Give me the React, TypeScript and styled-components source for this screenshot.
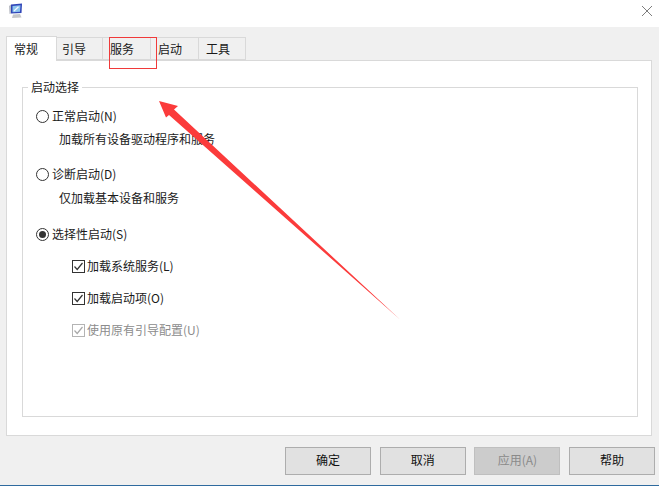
import React from "react";
import styled, { createGlobalStyle } from "styled-components";

const GlobalStyle = createGlobalStyle`
  html, body {
    margin: 0;
    padding: 0;
    background: #f0f0f0;
  }
  * {
    box-sizing: border-box;
  }
`;

const TABS = [
  { label: "常规", width: 51, pad: 7 },
  { label: "引导", width: 46, pad: 5 },
  { label: "服务", width: 48, pad: 7 },
  { label: "启动", width: 48, pad: 7 },
  { label: "工具", width: 47, pad: 7 },
];

export default function App() {
  return (
    <Dialog>
      <GlobalStyle />
      <TitleBar>
        <AppIcon viewBox="0 0 16 16">
          <path d="M3 1.5 L14 0.5 L13.5 10 L3 10.5 Z" fill="#2f45b8" />
          <path d="M4.5 3 L12.5 2.3 L12 8.8 L4.5 9.2 Z" fill="#8cc4ee" />
          <path d="M6 8 L10.5 3.8" stroke="#f4f8ff" strokeWidth="1.2" />
          <path d="M1 3 L3 1.5 L3 10.5 L1.5 11 Z" fill="#b9bcc4" />
          <path d="M5 11.5 L12 11 L13.5 14.5 L4 15 Z" fill="#c5c7c9" />
        </AppIcon>
        <CloseIcon viewBox="0 0 10 10">
          <path d="M0 0 L10 10 M10 0 L0 10" stroke="#7d7d7d" strokeWidth="1" fill="none" />
        </CloseIcon>
      </TitleBar>

      <Body>
        <TabRow>
          {TABS.map((tab, i) => (
            <Tab key={tab.label} $active={i === 0} $width={tab.width} $pad={tab.pad}>
              {tab.label}
            </Tab>
          ))}
        </TabRow>

        <Panel>
          <GroupBox>
            <GroupLegend>启动选择</GroupLegend>

            <OptionBlock $height={58}>
              <Option>
                <Radio />
                正常启动(N)
              </Option>
              <Description $gap={6}>加载所有设备驱动程序和服务</Description>
            </OptionBlock>

            <OptionBlock $height={60}>
              <Option>
                <Radio />
                诊断启动(D)
              </Option>
              <Description $gap={7}>仅加载基本设备和服务</Description>
            </OptionBlock>

            <OptionBlock $height={32}>
              <Option>
                <Radio $checked />
                选择性启动(S)
              </Option>
            </OptionBlock>

            <CheckList>
              <CheckRow>
                <CheckBox />
                加载系统服务(L)
              </CheckRow>
              <CheckRow>
                <CheckBox />
                加载启动项(O)
              </CheckRow>
              <CheckRow $disabled>
                <CheckBox $disabled />
                使用原有引导配置(U)
              </CheckRow>
            </CheckList>
          </GroupBox>
        </Panel>

        <ButtonRow>
          <DialogButton>确定</DialogButton>
          <DialogButton>取消</DialogButton>
          <DialogButton $disabled>应用(A)</DialogButton>
          <DialogButton>帮助</DialogButton>
        </ButtonRow>
      </Body>
      <BottomEdge />

      <Highlight />
      <Arrow viewBox="0 0 659 486">
        <polygon
          points="159,101 178,106 174,109.5 400,319.5 169,115 166,117.5"
          fill="#fb3b3b"
        />
      </Arrow>
    </Dialog>
  );
}

function CheckBox({ $disabled }: { $disabled?: boolean }) {
  const color = $disabled ? "#b4b4b4" : "#333333";
  return (
    <CheckIcon viewBox="0 0 13 13">
      <rect x="0.5" y="0.5" width="12" height="12" fill="#fff" stroke={color} />
      <path d="M2.5 6.5 L5.2 9.5 L10.5 3" stroke={$disabled ? "#a8a8a8" : "#333"} strokeWidth="1.2" fill="none" />
    </CheckIcon>
  );
}

const Dialog = styled.div`
  position: relative;
  width: 659px;
  height: 486px;
  overflow: hidden;
  display: flex;
  flex-direction: column;
  background: #f0f0f0;
  color: #1a1a1a;
  font-family: "Noto Sans CJK SC", "Liberation Sans", sans-serif;
  font-size: 12px;
`;

const TitleBar = styled.div`
  height: 27px;
  flex: none;
  background: #fff;
  display: flex;
  align-items: flex-start;
  justify-content: space-between;
  padding: 3px 7px 0 8px;
`;

const AppIcon = styled.svg`
  width: 16px;
  height: 16px;
`;

const CloseIcon = styled.svg`
  width: 10px;
  height: 10px;
  margin-top: 3px;
`;

const Body = styled.div`
  flex: 1;
  display: flex;
  flex-direction: column;
  padding: 9px 7px 0 6px;
`;

const TabRow = styled.div`
  display: flex;
  height: 24px;
  align-items: flex-end;
  position: relative;
  z-index: 1;
`;

const Tab = styled.div<{ $active?: boolean; $width: number; $pad: number }>`
  height: ${(p) => (p.$active ? "25px" : "23px")};
  width: ${(p) => p.$width}px;
  flex: none;
  margin-bottom: ${(p) => (p.$active ? "-1px" : "0")};
  padding-left: ${(p) => p.$pad}px;
  line-height: ${(p) => (p.$active ? "23px" : "21px")};
  background: ${(p) => (p.$active ? "#fff" : "#f0f0f0")};
  border: 1px solid #d9d9d9;
  border-left: ${(p) => (p.$active ? "1px solid #d9d9d9" : "none")};
  border-bottom: ${(p) => (p.$active ? "none" : "1px solid #d9d9d9")};
`;

const Panel = styled.div`
  height: 376px;
  background: #fff;
  border: 1px solid #d9d9d9;
  padding: 26px 13px 18px 15px;
`;

const GroupBox = styled.div`
  position: relative;
  height: 100%;
  border: 1px solid #d9d9d9;
  padding: 19px 0 0 13px;
`;

const GroupLegend = styled.div`
  position: absolute;
  top: -9px;
  left: 5px;
  padding: 0 3px;
  background: #fff;
  line-height: 15px;
`;

const OptionBlock = styled.div<{ $height: number }>`
  height: ${(p) => p.$height}px;
`;

const Option = styled.div`
  display: flex;
  align-items: center;
  gap: 3px;
  height: 18px;
  line-height: 16px;
`;

const Description = styled.div<{ $gap: number }>`
  margin: ${(p) => p.$gap}px 0 0 23px;
  line-height: 16px;
`;

const Radio = styled.span<{ $checked?: boolean }>`
  width: 13px;
  height: 13px;
  flex: none;
  border-radius: 50%;
  background: #fff;
  border: 1px solid #333;
  display: flex;
  align-items: center;
  justify-content: center;
  &::after {
    content: "";
    display: ${(p) => (p.$checked ? "block" : "none")};
    width: 7px;
    height: 7px;
    border-radius: 50%;
    background: #333;
  }
`;

const CheckList = styled.div`
  display: flex;
  flex-direction: column;
  gap: 14px;
  padding-left: 36px;
`;

const CheckRow = styled.div<{ $disabled?: boolean }>`
  display: flex;
  align-items: center;
  gap: 2px;
  height: 18px;
  line-height: 16px;
  color: ${(p) => (p.$disabled ? "#8c8c8c" : "#1a1a1a")};
`;

const CheckIcon = styled.svg`
  width: 13px;
  height: 13px;
  flex: none;
`;

const ButtonRow = styled.div`
  display: flex;
  justify-content: flex-end;
  gap: 8.667px;
  margin: 11px -3px 0 0;
`;

const DialogButton = styled.div<{ $disabled?: boolean }>`
  width: 86px;
  height: 28px;
  display: flex;
  align-items: center;
  justify-content: center;
  padding-bottom: 3px;
  background: ${(p) => (p.$disabled ? "#cccccc" : "#e1e1e1")};
  border: 1px solid ${(p) => (p.$disabled ? "#bfbfbf" : "#adadad")};
  color: ${(p) => (p.$disabled ? "#8a8a8a" : "#111")};
`;

const BottomEdge = styled.div`
  height: 1px;
  flex: none;
  background: #2e6a9e;
`;

const Highlight = styled.div`
  position: absolute;
  left: 109px;
  top: 37px;
  width: 48px;
  height: 32px;
  border: 1px solid #f03a3a;
  z-index: 2;
`;

const Arrow = styled.svg`
  position: absolute;
  inset: 0;
  width: 659px;
  height: 486px;
  z-index: 3;
  pointer-events: none;
`;
